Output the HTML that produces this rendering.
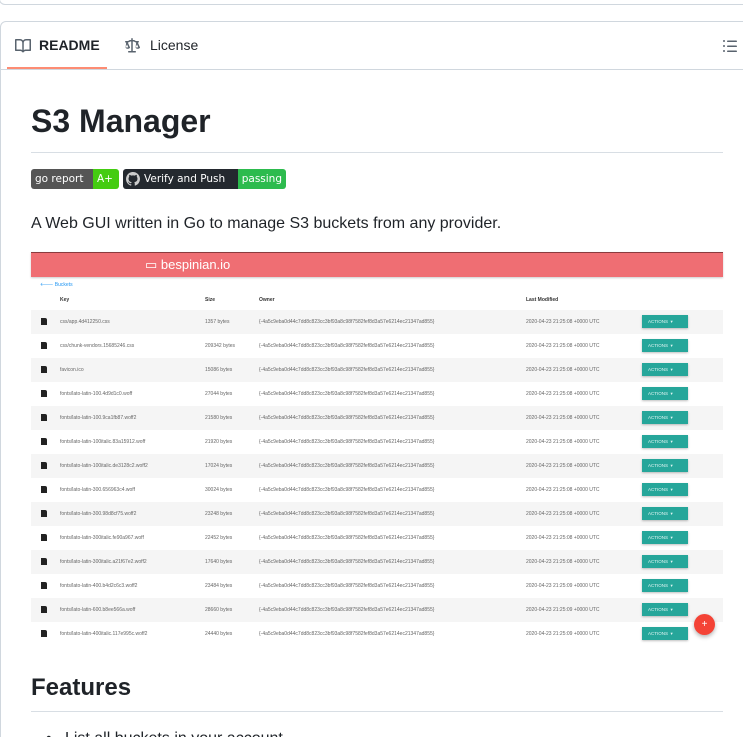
<!DOCTYPE html>
<html style="width:743px;height:737px;overflow:hidden"><head><meta charset="utf-8"><style>
*{margin:0;padding:0;box-sizing:border-box}
body{width:743px;height:737px;overflow:hidden;background:#fff;font-family:"Liberation Sans",Arial,sans-serif;color:#1f2328;position:relative}
.abs{position:absolute}
.topcard{left:-1px;top:-10px;width:760px;height:15px;border:1px solid #d0d7de;border-radius:6px}
.card{left:0;top:21px;width:760px;height:760px;border:1px solid #d0d7de;border-radius:6px}
.tabs{left:0;top:21px;width:760px;height:49px;border-bottom:1px solid #d0d7de}
.tab{top:37px;font-size:14px}
.ul{left:7px;top:67px;width:100px;height:2px;background:#fd8c73}
h1{position:absolute;left:31px;top:101px;font-size:32px;font-weight:600;line-height:40px}
.hr{left:31px;height:1px;background:#d8dee4;width:692px}
.badge{position:absolute;top:169px;height:20px;font-family:"DejaVu Sans",sans-serif;font-size:10.5px;color:#fff;line-height:20px;border-radius:3px;overflow:hidden;display:flex}
.badge span{padding:0 4px}
p.desc{position:absolute;left:31px;top:213px;font-size:16px;line-height:22px}
.shot{left:31px;top:252px;width:692px;height:394px;background:#fff;font-family:"Liberation Sans",sans-serif}
.hdr{left:0;top:0;width:692px;height:25px;background:#ef6e73;border-top:1px solid #8a3b3e;box-shadow:0 1px 2px rgba(0,0,0,.2)}
.row{position:absolute;left:0;width:692px;height:24px;font-size:5px;color:#666;line-height:24px}
.row.g{background:#f5f5f5}
.row div{position:absolute;top:0}
.fi{left:10px;top:8px!important;width:6px;height:7px;background:#222;border-radius:0 2px 0 0}
.btn{left:611px;top:5px!important;width:46px;height:13px;background:#26a69a;color:#e0f5f3;font-size:4.5px;line-height:13px;padding-left:6px;box-shadow:0 1px 2px rgba(0,0,0,.25)}
</style></head><body>
<div class="abs topcard"></div>
<div class="abs card"></div>
<div class="abs tabs"></div>
<svg class="abs" style="left:15px;top:38px" width="16" height="16" viewBox="0 0 16 16" fill="#59636e"><path d="M0 1.75A.75.75 0 0 1 .75 1h4.25c1.2 0 2.270.56 3 1.44A3.74 3.74 0 0 1 11 1h4.25a.75.75 0 0 1 .75.75v10.5a.75.75 0 0 1-.75.75h-4.51a2.250 2.250 0 0 0-1.590.66l-.63.63a.75.75 0 0 1-1.06 0l-.63-.63A2.250 2.250 0 0 0 5.26 13H.75a.75.75 0 0 1-.75-.75Zm7.25 3.25A2.5 2.5 0 0 0 5 2.5H1.5v9h3.76c.74 0 1.450.24 2.030.68Zm1.5 7.18c.58-.44 1.290-.68 2.030-.68h3.72v-9H11a2.5 2.5 0 0 0-2.25 2.5Z"/></svg>
<div class="abs tab" style="left:39px;font-weight:700">README</div>
<svg class="abs" style="left:124px;top:38px" width="16" height="16" viewBox="0 0 16 16" fill="#59636e"><path d="M8.75.75V2h.985c.304 0 .603.08.867.231l1.290.736c.038.022.08.033.124.033h2.234a.75.75 0 0 1 0 1.5h-.427l2.111 4.692a.75.75 0 0 1-.154.838c-.6.5-1.2.75-2 .75s-1.4-.3-2-.8a.75.75 0 0 1-.154-.838L12.178 4.5h-.162c-.305 0-.604-.079-.868-.231l-1.290-.736a.245.245 0 0 0-.124-.033H8.75V13h2.5a.75.75 0 0 1 0 1.5h-6.5a.75.75 0 0 1 0-1.5h2.5V3.5h-.984a.245.245 0 0 0-.124.033l-1.289.737c-.265.15-.564.23-.869.23h-.162l2.112 4.692a.75.75 0 0 1-.154.838c-.6.5-1.2.75-2 .75s-1.4-.3-2-.8a.75.75 0 0 1-.154-.838L2.178 4.5H1.75a.75.75 0 0 1 0-1.5h2.234a.25.25 0 0 0 .125-.033l1.288-.737c.265-.15.564-.23.869-.23h.984V.75a.75.75 0 0 1 1.5 0Zm2.945 8.477c.285.135.718.273 1.305.273s1.020-.138 1.305-.273L13 6.327Zm-10 0c.285.135.718.273 1.305.273s1.020-.138 1.305-.273L3 6.327Z"/></svg>
<div class="abs tab" style="left:150px;color:#1f2328">License</div>
<svg class="abs" style="left:722px;top:38px" width="16" height="16" viewBox="0 0 16 16" fill="#59636e"><path d="M5.75 2.5h8.5a.75.75 0 0 1 0 1.5h-8.5a.75.75 0 0 1 0-1.5Zm0 5h8.5a.75.75 0 0 1 0 1.5h-8.5a.75.75 0 0 1 0-1.5Zm0 5h8.5a.75.75 0 0 1 0 1.5h-8.5a.75.75 0 0 1 0-1.5ZM2 14a1 1 0 1 1 0-2 1 1 0 0 1 0 2Zm1-6a1 1 0 1 1-2 0 1 1 0 0 1 2 0ZM2 4a1 1 0 1 1 0-2 1 1 0 0 1 0 2Z"/></svg>
<div class="abs ul"></div>
<h1>S3 Manager</h1>
<div class="abs hr" style="top:152px"></div>
<div class="badge" style="left:31px;width:88px"><span style="background:#555;width:62px">go report</span><span style="background:#44cc11;flex:1">A+</span></div>
<div class="badge" style="left:123px;width:163px"><span style="background:#24292f;width:115px;padding-left:21px;position:relative">Verify and Push<svg style="position:absolute;left:3px;top:3px" width="14" height="14" viewBox="0 0 16 16" fill="#ccc"><path d="M8 0C3.58 0 0 3.58 0 8c0 3.540 2.290 6.530 5.470 7.590.4.07.55-.17.55-.38v-1.330c-2.230.48-2.700-1.080-2.700-1.080-.36-.92-.89-1.170-.89-1.170-.73-.5.05-.49.05-.49.8.06 1.230.83 1.230.83.71 1.220 1.870.87 2.330.66.07-.52.28-.87.51-1.070-1.780-.2-3.640-.89-3.640-3.950 0-.87.31-1.590.82-2.150-.08-.2-.36-1.020.08-2.120 0 0 .67-.21 2.200.82a7.600 7.600 0 0 1 4 0c1.530-1.040 2.200-.82 2.200-.82.44 1.100.16 1.920.08 2.120.51.56.82 1.270.82 2.150 0 3.070-1.870 3.750-3.650 3.950.29.25.54.73.54 1.480v2.200c0 .21.15.46.55.38A8 8 0 0 0 16 8c0-4.420-3.580-8-8-8Z"/></svg></span><span style="background:#2dbb4e;flex:1">passing</span></div>
<p class="desc">A Web GUI written in Go to manage S3 buckets from any provider.</p>
<div class="abs shot">
  <div class="abs hdr"><div class="abs" style="left:114px;top:4px;font-size:13px;color:#fff">▭ bespinian.io</div></div>
  <div class="abs" style="left:9px;top:30px;font-size:5px;color:#2196f3">🡐 Buckets</div>
  <div class="row" style="top:36px;color:#333;font-weight:bold"><div style="left:29px">Key</div><div style="left:174px">Size</div><div style="left:228px">Owner</div><div style="left:495px">Last Modified</div></div>
  <div class="row g" style="top:58px"><div class="fi"></div><div style="left:29px">css/app.4d412250.css</div><div style="left:174px">1357 bytes</div><div style="left:228px">{-4a5c9eba0d44c7dd8c823cc3bf93a8c98f7582fef8d3a57e6214ec21347ad855}</div><div style="left:495px">2020-04-23 21:25:08 +0000 UTC</div><div class="btn">ACTIONS &nbsp;▾</div></div>
  <div class="row" style="top:82px"><div class="fi"></div><div style="left:29px">css/chunk-vendors.15685246.css</div><div style="left:174px">209342 bytes</div><div style="left:228px">{-4a5c9eba0d44c7dd8c823cc3bf93a8c98f7582fef8d3a57e6214ec21347ad855}</div><div style="left:495px">2020-04-23 21:25:08 +0000 UTC</div><div class="btn">ACTIONS &nbsp;▾</div></div>
  <div class="row g" style="top:106px"><div class="fi"></div><div style="left:29px">favicon.ico</div><div style="left:174px">15086 bytes</div><div style="left:228px">{-4a5c9eba0d44c7dd8c823cc3bf93a8c98f7582fef8d3a57e6214ec21347ad855}</div><div style="left:495px">2020-04-23 21:25:08 +0000 UTC</div><div class="btn">ACTIONS &nbsp;▾</div></div>
  <div class="row" style="top:130px"><div class="fi"></div><div style="left:29px">fonts/lato-latin-100.4d9d1c0.woff</div><div style="left:174px">27044 bytes</div><div style="left:228px">{-4a5c9eba0d44c7dd8c823cc3bf93a8c98f7582fef8d3a57e6214ec21347ad855}</div><div style="left:495px">2020-04-23 21:25:08 +0000 UTC</div><div class="btn">ACTIONS &nbsp;▾</div></div>
  <div class="row g" style="top:154px"><div class="fi"></div><div style="left:29px">fonts/lato-latin-100.9ca1fb87.woff2</div><div style="left:174px">21580 bytes</div><div style="left:228px">{-4a5c9eba0d44c7dd8c823cc3bf93a8c98f7582fef8d3a57e6214ec21347ad855}</div><div style="left:495px">2020-04-23 21:25:08 +0000 UTC</div><div class="btn">ACTIONS &nbsp;▾</div></div>
  <div class="row" style="top:178px"><div class="fi"></div><div style="left:29px">fonts/lato-latin-100italic.83a15912.woff</div><div style="left:174px">21920 bytes</div><div style="left:228px">{-4a5c9eba0d44c7dd8c823cc3bf93a8c98f7582fef8d3a57e6214ec21347ad855}</div><div style="left:495px">2020-04-23 21:25:08 +0000 UTC</div><div class="btn">ACTIONS &nbsp;▾</div></div>
  <div class="row g" style="top:202px"><div class="fi"></div><div style="left:29px">fonts/lato-latin-100italic.de3128c2.woff2</div><div style="left:174px">17024 bytes</div><div style="left:228px">{-4a5c9eba0d44c7dd8c823cc3bf93a8c98f7582fef8d3a57e6214ec21347ad855}</div><div style="left:495px">2020-04-23 21:25:08 +0000 UTC</div><div class="btn">ACTIONS &nbsp;▾</div></div>
  <div class="row" style="top:226px"><div class="fi"></div><div style="left:29px">fonts/lato-latin-300.656963c4.woff</div><div style="left:174px">30024 bytes</div><div style="left:228px">{-4a5c9eba0d44c7dd8c823cc3bf93a8c98f7582fef8d3a57e6214ec21347ad855}</div><div style="left:495px">2020-04-23 21:25:08 +0000 UTC</div><div class="btn">ACTIONS &nbsp;▾</div></div>
  <div class="row g" style="top:250px"><div class="fi"></div><div style="left:29px">fonts/lato-latin-300.98d8cf75.woff2</div><div style="left:174px">23248 bytes</div><div style="left:228px">{-4a5c9eba0d44c7dd8c823cc3bf93a8c98f7582fef8d3a57e6214ec21347ad855}</div><div style="left:495px">2020-04-23 21:25:08 +0000 UTC</div><div class="btn">ACTIONS &nbsp;▾</div></div>
  <div class="row" style="top:274px"><div class="fi"></div><div style="left:29px">fonts/lato-latin-300italic.fe90a967.woff</div><div style="left:174px">22452 bytes</div><div style="left:228px">{-4a5c9eba0d44c7dd8c823cc3bf93a8c98f7582fef8d3a57e6214ec21347ad855}</div><div style="left:495px">2020-04-23 21:25:08 +0000 UTC</div><div class="btn">ACTIONS &nbsp;▾</div></div>
  <div class="row g" style="top:298px"><div class="fi"></div><div style="left:29px">fonts/lato-latin-300italic.a21f67e2.woff2</div><div style="left:174px">17640 bytes</div><div style="left:228px">{-4a5c9eba0d44c7dd8c823cc3bf93a8c98f7582fef8d3a57e6214ec21347ad855}</div><div style="left:495px">2020-04-23 21:25:08 +0000 UTC</div><div class="btn">ACTIONS &nbsp;▾</div></div>
  <div class="row" style="top:322px"><div class="fi"></div><div style="left:29px">fonts/lato-latin-400.b4d2c6c3.woff2</div><div style="left:174px">23484 bytes</div><div style="left:228px">{-4a5c9eba0d44c7dd8c823cc3bf93a8c98f7582fef8d3a57e6214ec21347ad855}</div><div style="left:495px">2020-04-23 21:25:09 +0000 UTC</div><div class="btn">ACTIONS &nbsp;▾</div></div>
  <div class="row g" style="top:346px"><div class="fi"></div><div style="left:29px">fonts/lato-latin-600.b8ee566a.woff</div><div style="left:174px">28660 bytes</div><div style="left:228px">{-4a5c9eba0d44c7dd8c823cc3bf93a8c98f7582fef8d3a57e6214ec21347ad855}</div><div style="left:495px">2020-04-23 21:25:09 +0000 UTC</div><div class="btn">ACTIONS &nbsp;▾</div></div>
  <div class="row" style="top:370px"><div class="fi"></div><div style="left:29px">fonts/lato-latin-400italic.117e995c.woff2</div><div style="left:174px">24440 bytes</div><div style="left:228px">{-4a5c9eba0d44c7dd8c823cc3bf93a8c98f7582fef8d3a57e6214ec21347ad855}</div><div style="left:495px">2020-04-23 21:25:09 +0000 UTC</div><div class="btn">ACTIONS &nbsp;▾</div></div>
  <div class="abs" style="left:663px;top:362px;width:21px;height:21px;border-radius:50%;background:#f44336;color:#fff;font-size:10px;line-height:21px;text-align:center;box-shadow:0 2px 4px rgba(0,0,0,.3)">+</div>
</div>
<div class="abs" style="left:31px;top:673px;font-size:24px;font-weight:600;line-height:30px">Features</div>
<div class="abs hr" style="top:711px"></div>
<div class="abs" style="left:46px;top:728px;font-size:16px;line-height:22px">•&nbsp;&nbsp;&nbsp;List all buckets in your account</div>
</body></html>
